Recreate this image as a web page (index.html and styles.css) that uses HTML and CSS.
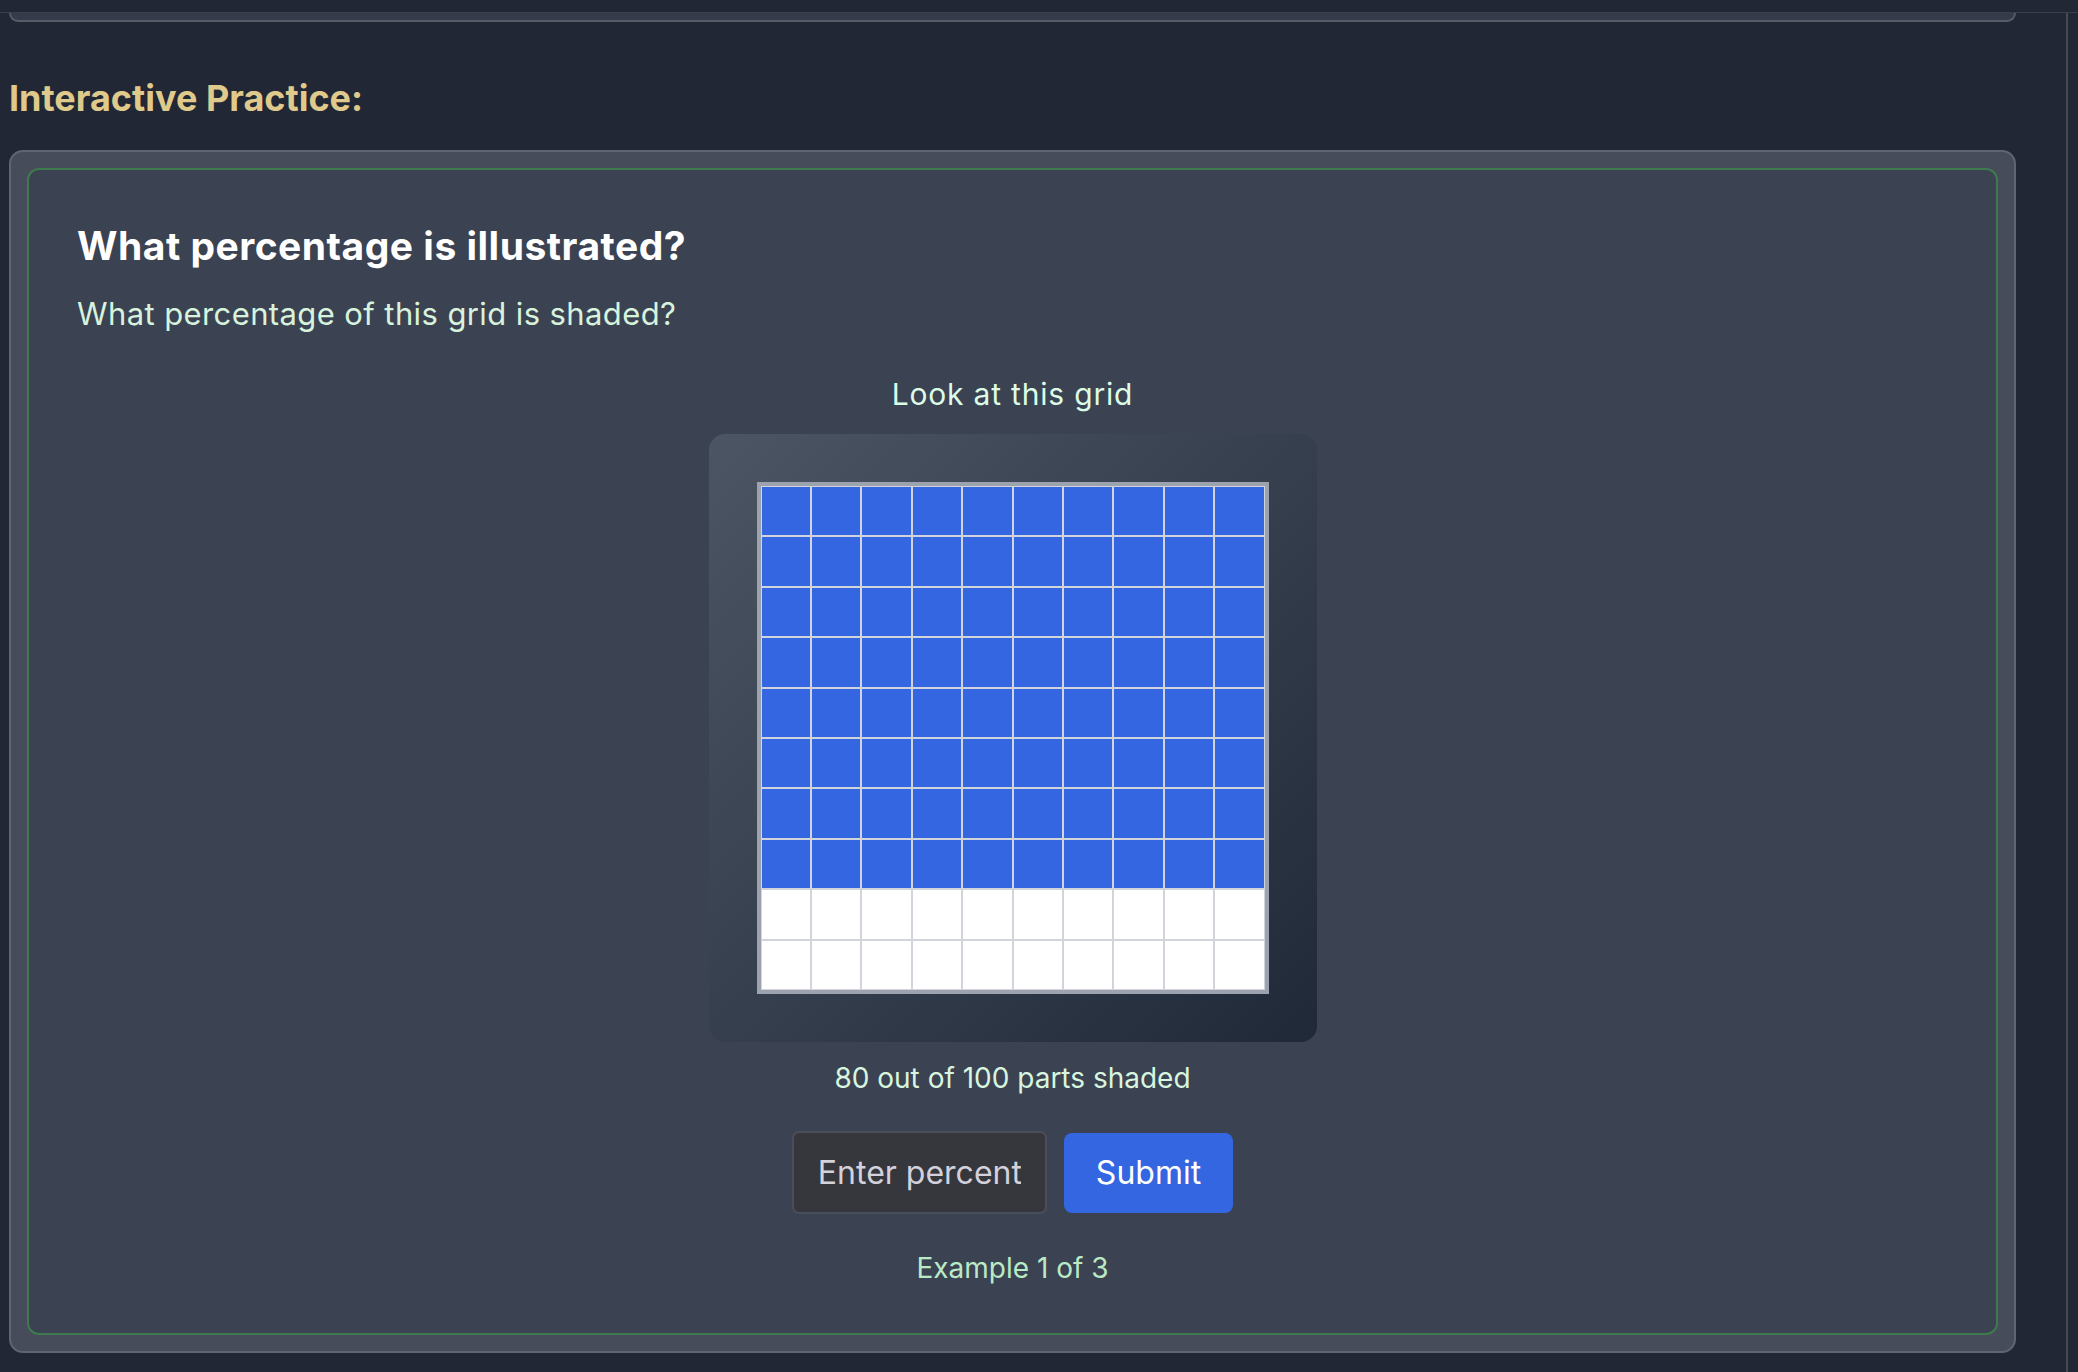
FILE: index.html
```html
<!DOCTYPE html>
<html lang="en">
<head>
<meta charset="utf-8">
<title>Interactive Practice</title>
<link rel="stylesheet" href="styles.css">
</head>
<body>
<div class="topbar"></div>
<div class="layout">
  <div class="main">
    <div class="prev-card"></div>
    <h2 class="section-title">Interactive Practice:</h2>
    <section class="practice">
      <div class="question">
        <h3 class="q-title">What percentage is illustrated?</h3>
        <p class="q-text">What percentage of this grid is shaded?</p>
        <div class="visual">
          <p class="look">Look at this grid</p>
          <div class="grid-box">
            <div class="grid" id="grid"></div>
          </div>
          <p class="caption">80 out of 100 parts shaded</p>
          <form class="answer" onsubmit="return false;">
            <input class="answer-input" type="text" placeholder="Enter percent">
            <button class="submit" type="submit">Submit</button>
          </form>
          <p class="counter">Example 1 of 3</p>
        </div>
      </div>
    </section>
  </div>
  <div class="rail"></div>
</div>
<script src="script.js"></script>
</body>
</html>
```
FILE: script.js
```js
(function () {
  var grid = document.getElementById('grid');
  for (var i = 0; i < 100; i++) {
    var c = document.createElement('div');
    c.className = i < 80 ? 'cell on' : 'cell';
    grid.appendChild(c);
  }
})();
```
FILE: styles.css
```css
* { box-sizing: border-box; }
html, body { margin: 0; padding: 0; }
body {
  background: #212735;
  font-family: Inter, "Noto Sans", sans-serif;
  color: #fff;
  height: 1372px;
  overflow: hidden;
}
.topbar {
  height: 13px;
  border-bottom: 1px solid #3a3f4d;
}
.layout {
  display: flex;
  height: 1359px;
}
.main {
  flex: 1;
  padding: 0 50px 0 9px;
}
.rail {
  width: 12px;
  border-left: 2px solid #454a57;
}
.prev-card {
  height: 9px;
  background: #353b4b;
  border: 2px solid #575c69;
  border-top: 0;
  border-radius: 0 0 12px 12px;
}
.section-title {
  margin: 54px 0 30px;
  font-size: 36px;
  line-height: 44px;
  font-weight: 700;
  color: #dfc98b;
}
.practice {
  background: #464c5a;
  border: 2px solid #5f6573;
  border-radius: 14px;
  padding: 16px;
}
.question {
  background: #3b4252;
  border: 2px solid #3e7a4d;
  border-radius: 12px;
  padding: 54px 48px 48px;
}
.q-title {
  margin: 0;
  font-size: 39px;
  line-height: 44px;
  font-weight: 700;
  letter-spacing: 0.5px;
  color: #ffffff;
}
.q-text {
  margin: 28px 0 0;
  font-size: 31px;
  line-height: 36px;
  letter-spacing: 0.4px;
  color: #d8f3dd;
}
.visual {
  display: flex;
  flex-direction: column;
  align-items: center;
}
.look {
  margin: 44px 0 0;
  font-size: 30px;
  line-height: 36px;
  letter-spacing: 0.8px;
  color: #dcfce7;
}
.grid-box {
  margin-top: 22px;
  padding: 48px;
  border-radius: 16px;
  background: linear-gradient(135deg, #4b5563 0%, #1f2937 100%);
}
.grid {
  width: 512px;
  height: 512px;
  border: 4px solid #9ca3af;
  display: grid;
  grid-template-columns: repeat(10, 1fr);
  grid-template-rows: repeat(10, 1fr);
  background: #ffffff;
}
.cell {
  border: 1px solid #d1d5db;
  background: #ffffff;
}
.cell.on { background: #3366e0; }
.caption {
  margin: 19px 0 0;
  font-size: 28px;
  line-height: 34px;
  color: #d8f5df;
}
.answer {
  margin: 36px 0 0;
  display: flex;
  align-items: center;
  gap: 17px;
}
.answer-input {
  width: 255px;
  height: 83px;
  padding: 0 24px;
  background: #36373c;
  border: 2px solid #4a4e5b;
  border-radius: 7px;
  color: #fff;
  font-family: Inter, "Noto Sans", sans-serif;
  font-size: 32px;
  outline: none;
}
.answer-input::placeholder { color: #d3d1db; opacity: 1; }
.submit {
  height: 80px;
  padding: 0 32px;
  background: #3366e0;
  color: #ffffff;
  border: 0;
  border-radius: 8px;
  font-family: Inter, "Noto Sans", sans-serif;
  font-size: 32px;
}
.counter {
  margin: 37px 0 0;
  font-size: 28px;
  line-height: 34px;
  color: #bae9c6;
}
```
